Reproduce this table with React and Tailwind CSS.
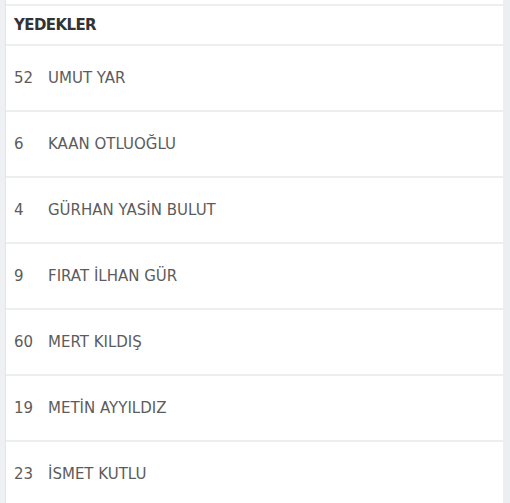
import React from "react";

const players = [
  { no: "52", name: "UMUT YAR" },
  { no: "6", name: "KAAN OTLUOĞLU" },
  { no: "4", name: "GÜRHAN YASİN BULUT" },
  { no: "9", name: "FIRAT İLHAN GÜR" },
  { no: "60", name: "MERT KILDIŞ" },
  { no: "19", name: "METİN AYYILDIZ" },
  { no: "23", name: "İSMET KUTLU" },
];

const App = () => {
  return (
    <div
      className="flex h-[503px] w-[510px] overflow-hidden bg-[#eceef2]"
      style={{ fontFamily: '"DejaVu Sans", sans-serif' }}
    >
      <div className="w-[5px] bg-[#eef0f4]" />
      <div className="flex-1 border-l border-[#e3e5e9] bg-white">
        <div className="h-[4px]" />
        {/* Header */}
        <div className="flex h-[40px] items-center border-t-2 border-[#eceef0] px-[8px]">
          <span className="text-[15px] font-bold tracking-[-0.6px] text-[#333]">YEDEKLER</span>
        </div>
        {/* Substitutes */}
        {players.map((p) => (
          <div
            key={p.no}
            className="flex h-[66px] items-center border-t-2 border-[#eceef0] px-[8px] text-[15px] text-[#5c5c5c]"
          >
            <span className="w-[34px]">{p.no}</span>
            <span>{p.name}</span>
          </div>
        ))}
      </div>
      <div className="w-[7px] bg-[#eceef2]" />
    </div>
  );
};

export default App;
